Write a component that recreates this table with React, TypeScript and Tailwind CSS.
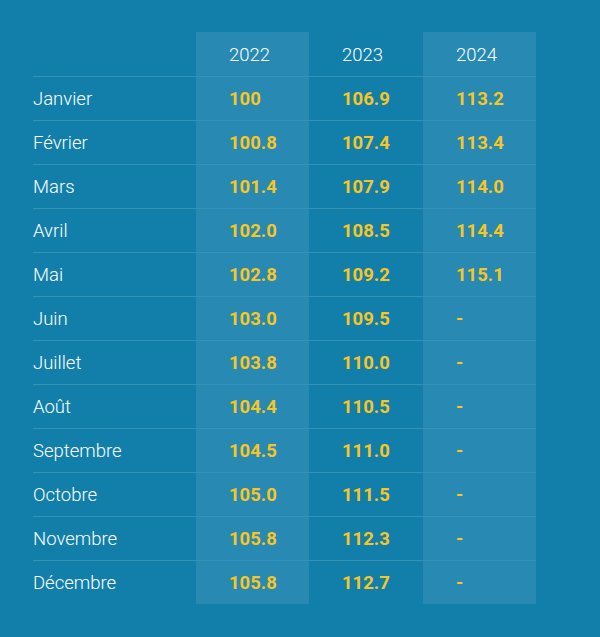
const rows: [string, string, string, string][] = [
  ['Janvier', '100', '106.9', '113.2'],
  ['Février', '100.8', '107.4', '113.4'],
  ['Mars', '101.4', '107.9', '114.0'],
  ['Avril', '102.0', '108.5', '114.4'],
  ['Mai', '102.8', '109.2', '115.1'],
  ['Juin', '103.0', '109.5', '-'],
  ['Juillet', '103.8', '110.0', '-'],
  ['Août', '104.4', '110.5', '-'],
  ['Septembre', '104.5', '111.0', '-'],
  ['Octobre', '105.0', '111.5', '-'],
  ['Novembre', '105.8', '112.3', '-'],
  ['Décembre', '105.8', '112.7', '-'],
];

export default function App() {
  return (
    <div
      className="w-[600px] h-[637px] bg-[#127fab] pt-[32px] pl-[33px]"
      style={{ fontFamily: 'Roboto, "Liberation Sans", sans-serif' }}
    >
      <div className="w-[503px]">
        {/* header */}
        <div className="grid grid-cols-[163px_113px_114px_113px] h-[44px] text-[18.5px] font-light text-white">
          <div />
          <div className="bg-[#2889b2] pt-[4px] pl-[33px] flex items-center">2022</div>
          <div className="pt-[4px] pl-[33px] flex items-center">2023</div>
          <div className="bg-[#2889b2] pt-[4px] pl-[33px] flex items-center">2024</div>
        </div>
        {rows.map(([month, a, b, c]) => (
          <div
            key={month}
            className="grid grid-cols-[163px_113px_114px_113px] h-[44px] border-t border-white/15 text-[18.5px]"
          >
            <div className="flex items-center pt-[3px] font-light text-white">{month}</div>
            <div className="bg-[#2889b2] pl-[33px] pt-[3px] flex items-center font-bold text-[#f7c624]">{a}</div>
            <div className="pl-[33px] pt-[3px] flex items-center font-bold text-[#f7c624]">{b}</div>
            <div className="bg-[#2889b2] pl-[33px] pt-[3px] flex items-center font-bold text-[#f7c624]">{c}</div>
          </div>
        ))}
      </div>
    </div>
  );
}
